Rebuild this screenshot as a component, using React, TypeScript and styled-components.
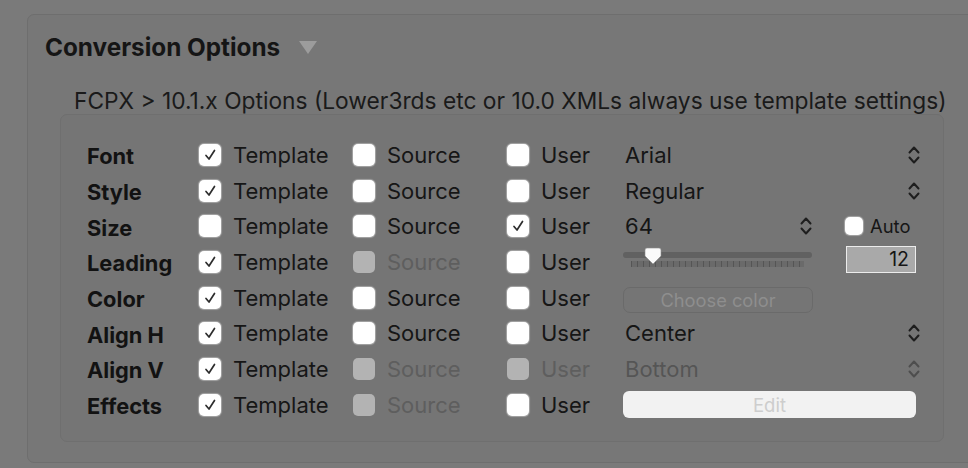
import React from "react";
import styled, { createGlobalStyle } from "styled-components";

const GlobalStyle = createGlobalStyle`
  html, body {
    margin: 0;
    padding: 0;
    background: #7a7a7a;
    font-family: Inter, "Liberation Sans", sans-serif;
  }
`;

type Choice = "on" | "off" | "disabled";

type Row = {
  label: string;
  template: Choice;
  source: Choice;
  user: Choice;
  control: React.ReactNode;
};

const Chevrons = ({ dim }: { dim?: boolean }) => (
  <svg width="12" height="20" viewBox="0 0 12 20">
    <g fill="none" stroke={dim ? "#4e4e4e" : "#1e1e1e"} strokeWidth="2" strokeLinecap="round" strokeLinejoin="round">
      <path d="M1.5 7.5 L6 2.5 L10.5 7.5" />
      <path d="M1.5 12.5 L6 17.5 L10.5 12.5" />
    </g>
  </svg>
);

const CheckBox = ({ state, small }: { state: Choice; small?: boolean }) => (
  <Box $disabled={state === "disabled"} $small={small}>
    {state === "on" && (
      <svg width="14" height="14" viewBox="0 0 14 14">
        <path d="M3 7.5 L6 11 L11.5 2.5" fill="none" stroke="#2d2d2d" strokeWidth="1.7" strokeLinecap="round" strokeLinejoin="round" />
      </svg>
    )}
  </Box>
);

const Option = ({ state, text }: { state: Choice; text: string }) => (
  <OptionCell>
    <CheckBox state={state} />
    <OptionText $disabled={state === "disabled"}>{text}</OptionText>
  </OptionCell>
);

const Popup = ({ value, dim, narrow }: { value: string; dim?: boolean; narrow?: boolean }) => (
  <PopupBox $narrow={narrow}>
    <PopupText $dim={dim}>{value}</PopupText>
    <Chevrons dim={dim} />
  </PopupBox>
);

const buildRows = (): Row[] => [
  { label: "Font", template: "on", source: "off", user: "off", control: <Popup value="Arial" /> },
  { label: "Style", template: "on", source: "off", user: "off", control: <Popup value="Regular" /> },
  {
    label: "Size",
    template: "off",
    source: "off",
    user: "on",
    control: (
      <SplitControl>
        <Popup value="64" narrow />
        <AutoWrap>
          <CheckBox state="off" small />
          <AutoText>Auto</AutoText>
        </AutoWrap>
      </SplitControl>
    ),
  },
  {
    label: "Leading",
    template: "on",
    source: "disabled",
    user: "off",
    control: (
      <SplitControl>
        <Slider>
          <Track>
            <Thumb style={{ left: `${(21 / 188) * 100}%` }}>
              <svg width="18" height="18" viewBox="0 0 18 18">
                <path d="M3 1 H15 Q17 1 17 3 V9 L9 17 L1 9 V3 Q1 1 3 1 Z" fill="#fafafa" stroke="#8a8a8a" strokeWidth="0.6" />
              </svg>
            </Thumb>
          </Track>
          <Ticks />
        </Slider>
        <NumberField>12</NumberField>
      </SplitControl>
    ),
  },
  { label: "Color", template: "on", source: "off", user: "off", control: <ChooseButton>Choose color</ChooseButton> },
  { label: "Align H", template: "on", source: "off", user: "off", control: <Popup value="Center" /> },
  { label: "Align V", template: "on", source: "disabled", user: "disabled", control: <Popup value="Bottom" dim /> },
  { label: "Effects", template: "on", source: "disabled", user: "off", control: <EditButton>Edit</EditButton> },
];

const App = () => (
  <>
    <GlobalStyle />
    <Page>
      <Panel>
        <Header>
          <Title>Conversion Options</Title>
          <Disclosure />
        </Header>
        <Subtitle>FCPX &gt; 10.1.x Options (Lower3rds etc or 10.0 XMLs always use template settings)</Subtitle>
        <OptionsBox>
          {buildRows().map((row) => (
            <OptionRow key={row.label}>
              <RowLabel>{row.label}</RowLabel>
              <Option state={row.template} text="Template" />
              <Option state={row.source} text="Source" />
              <Option state={row.user} text="User" />
              <ControlCell>{row.control}</ControlCell>
            </OptionRow>
          ))}
        </OptionsBox>
      </Panel>
    </Page>
  </>
);

export default App;

const Page = styled.div`
  width: 968px;
  height: 468px;
  overflow: hidden;
  padding: 14px 0 0 27px;
  box-sizing: border-box;
`;

const Panel = styled.div`
  width: 960px;
  height: 449px;
  box-sizing: border-box;
  background: #777777;
  border: 1px solid #6e6e6e;
  border-radius: 7px;
  padding: 18px 0 0 17px;
`;

const Header = styled.div`
  display: flex;
  align-items: center;
  gap: 19px;
  height: 28px;
`;

const Title = styled.h2`
  margin: 0;
  font-size: 24.3px;
  font-weight: 700;
  color: #151515;
`;

const Disclosure = styled.span`
  width: 0;
  height: 0;
  border-left: 9px solid transparent;
  border-right: 9px solid transparent;
  border-top: 13px solid #9c9c9c;
  margin-top: 1px;
`;

const Subtitle = styled.div`
  margin: 27px 0 0 29px;
  font-size: 22.75px;
  color: #1a1a1a;
  line-height: 26px;
  white-space: nowrap;
`;

const OptionsBox = styled.div`
  margin: 0 0 0 15px;
  width: 884px;
  height: 328px;
  box-sizing: border-box;
  background: #757575;
  border: 1px solid #6f6f6f;
  border-radius: 7px;
  padding: 22px 0 0 26px;
`;

const OptionRow = styled.div`
  display: grid;
  grid-template-columns: 112px 154px 154px 116px 293px;
  align-items: center;
  height: 35.7px;
`;

const RowLabel = styled.div`
  font-size: 21.8px;
  font-weight: 700;
  color: #121212;
  padding-top: 3px;
`;

const OptionCell = styled.div`
  display: flex;
  align-items: center;
  gap: 12px;
`;

const Box = styled.span<{ $disabled?: boolean; $small?: boolean }>`
  width: ${(p) => (p.$small ? 18 : 22)}px;
  height: ${(p) => (p.$small ? 18 : 22)}px;
  border-radius: 5px;
  background: ${(p) => (p.$disabled ? "#b3b3b3" : "#ffffff")};
  box-shadow: ${(p) => (p.$disabled ? "none" : "0 0 1px 1px rgba(255,255,255,0.35)")};
  display: flex;
  align-items: center;
  justify-content: center;
  flex-shrink: 0;
`;

const OptionText = styled.span<{ $disabled?: boolean }>`
  font-size: 22px;
  color: ${(p) => (p.$disabled ? "#5e5e5e" : "#161616")};
`;

const ControlCell = styled.div`
  display: flex;
  align-items: center;
  height: 100%;
`;

const PopupBox = styled.div<{ $narrow?: boolean }>`
  width: ${(p) => (p.$narrow ? 189 : 297)}px;
  flex-shrink: 0;
  display: flex;
  align-items: center;
  justify-content: space-between;
  padding-left: 2px;
  box-sizing: border-box;
`;

const PopupText = styled.span<{ $dim?: boolean }>`
  font-size: 22px;
  color: ${(p) => (p.$dim ? "#555555" : "#161616")};
`;

const SplitControl = styled.div`
  display: flex;
  align-items: center;
  justify-content: space-between;
  width: 293px;
`;

const AutoWrap = styled.div`
  display: flex;
  align-items: center;
  gap: 7px;
  width: 71px;
`;

const AutoText = styled.span`
  font-size: 18.4px;
  color: #161616;
`;

const Slider = styled.div`
  width: 189px;
  display: flex;
  flex-direction: column;
  gap: 3px;
  margin-top: -4px;
`;

const Track = styled.div`
  position: relative;
  height: 6px;
  border-radius: 3px;
  background: #616161;
`;

const Thumb = styled.div`
  position: absolute;
  top: -5px;
  display: flex;
`;

const Ticks = styled.div`
  height: 6px;
  margin: 0 8px;
  background: repeating-linear-gradient(
    90deg,
    #555555 0px,
    #555555 1.5px,
    #6a6a6a 1.5px,
    #6a6a6a 6px
  );
`;

const NumberField = styled.div`
  width: 70px;
  height: 27px;
  box-sizing: border-box;
  background: #a9a9a9;
  border: 1px solid #ececec;
  font-size: 19.5px;
  line-height: 25px;
  color: #161616;
  text-align: right;
  padding-right: 6px;
  margin-top: -5px;
`;

const ChooseButton = styled.div`
  width: 190px;
  height: 26px;
  box-sizing: border-box;
  border: 1px solid #6a6a6a;
  border-radius: 7px;
  display: flex;
  align-items: center;
  justify-content: center;
  font-size: 18.3px;
  color: #8e8e8e;
  margin-top: 4px;
`;

const EditButton = styled.div`
  width: 293px;
  height: 27px;
  box-sizing: border-box;
  background: #f2f2f2;
  border-radius: 6px;
  display: flex;
  align-items: center;
  justify-content: center;
  font-size: 18.5px;
  color: #cdcdcd;
`;
